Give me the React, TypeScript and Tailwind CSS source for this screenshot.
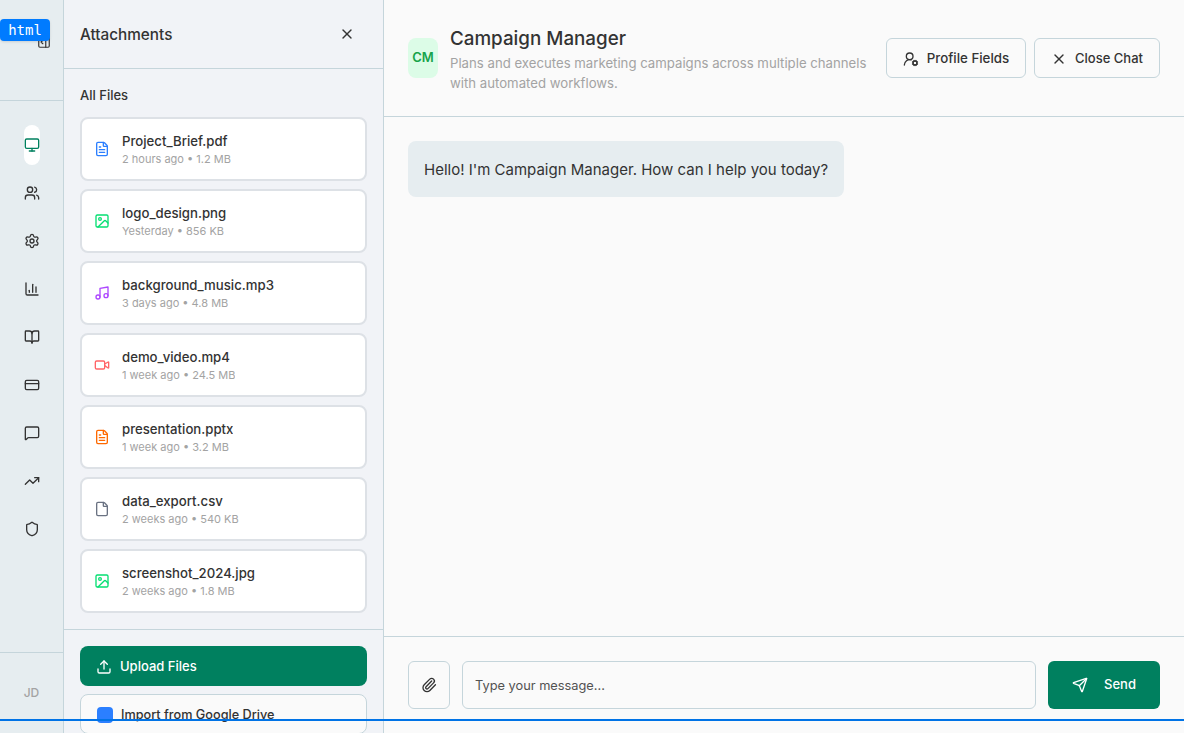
import {
  BookOpen,
  ChartColumn,
  CreditCard,
  File,
  FileText,
  Image,
  LucideIcon,
  MessageSquare,
  Monitor,
  Music,
  PanelRightOpen,
  Paperclip,
  Send,
  Settings,
  Shield,
  TrendingUp,
  Upload,
  UserRoundCog,
  Users,
  Video,
  X,
} from "lucide-react";

type Attachment = {
  name: string;
  meta: string;
  icon: LucideIcon;
  color: string;
};

const NAV: LucideIcon[] = [
  Users,
  Settings,
  ChartColumn,
  BookOpen,
  CreditCard,
  MessageSquare,
  TrendingUp,
  Shield,
];

const FILES: Attachment[] = [
  { name: "Project_Brief.pdf", meta: "2 hours ago • 1.2 MB", icon: FileText, color: "text-blue-500" },
  { name: "logo_design.png", meta: "Yesterday • 856 KB", icon: Image, color: "text-green-400" },
  { name: "background_music.mp3", meta: "3 days ago • 4.8 MB", icon: Music, color: "text-purple-500" },
  { name: "demo_video.mp4", meta: "1 week ago • 24.5 MB", icon: Video, color: "text-red-400" },
  { name: "presentation.pptx", meta: "1 week ago • 3.2 MB", icon: FileText, color: "text-orange-500" },
  { name: "data_export.csv", meta: "2 weeks ago • 540 KB", icon: File, color: "text-gray-500" },
  { name: "screenshot_2024.jpg", meta: "2 weeks ago • 1.8 MB", icon: Image, color: "text-green-400" },
];

function Sidebar() {
  return (
    <aside className="flex h-full w-16 shrink-0 flex-col border-r border-[#c5d5db] bg-[#e6edf0] text-[#333333]">
      <div className="flex h-[101px] shrink-0 items-start justify-end border-b border-[#c5d5db] pr-3 pt-[35px]">
        <PanelRightOpen size={14} />
      </div>
      <nav className="flex flex-1 flex-col items-center gap-2 pt-6">
        <div className="flex h-10 w-4 items-center justify-center rounded-lg bg-white text-[#00805f]">
          <Monitor size={16} className="shrink-0" />
        </div>
        {NAV.map((Icon, i) => (
          <div key={i} className="flex h-10 w-4 items-center justify-center">
            <Icon size={16} className="shrink-0" />
          </div>
        ))}
      </nav>
      <div className="flex h-[81px] shrink-0 items-center justify-center border-t border-[#c5d5db] text-xs font-medium text-[#a3a3a3]">
        JD
      </div>
    </aside>
  );
}

function FileRow({ file }: { file: Attachment }) {
  const Icon = file.icon;
  return (
    <div className="flex h-16 items-center gap-3 rounded-lg border-2 border-[#dde1e6] bg-white px-3">
      <Icon size={16} className={`shrink-0 ${file.color}`} />
      <div className="min-w-0">
        <p className="truncate text-[13.2px] leading-[18px] font-medium text-[#333333]">{file.name}</p>
        <p className="mt-px truncate text-[11px] leading-4 text-[#a3a3a3]">{file.meta}</p>
      </div>
    </div>
  );
}

function AttachmentsPanel() {
  return (
    <section className="flex h-full w-80 shrink-0 flex-col border-r border-[#c5d5db] bg-[#f1f3f7]">
      <div className="flex h-[69px] shrink-0 items-center justify-between border-b border-[#c5d5db] pl-4 pr-7">
        <h2 className="pt-0.5 text-[15.3px] font-[550] text-[#333333]">Attachments</h2>
        <X size={16} className="text-[#333333]" />
      </div>
      <div className="flex-1 px-4 pt-[18px]">
        <h3 className="mb-3.5 text-[13px] leading-4 font-medium text-[#333333]">All Files</h3>
        <div className="flex flex-col gap-2">
          {FILES.map((f) => (
            <FileRow key={f.name} file={f} />
          ))}
        </div>
      </div>
      <div className="flex h-[104px] shrink-0 flex-col gap-2 border-t border-[#c5d5db] px-4 pt-4">
        <button className="flex h-10 shrink-0 items-center gap-2 rounded-lg bg-[#00805f] px-4 pt-0.5 text-[13px] font-medium text-white">
          <Upload size={16} />
          Upload Files
        </button>
        <button className="flex h-10 shrink-0 items-center gap-2 rounded-lg border border-[#c5d5db] bg-[#fafafa] px-4 pt-0.5 text-[12.7px] font-medium text-[#333333]">
          <span className="size-4 rounded bg-blue-500" />
          Import from Google Drive
        </button>
      </div>
    </section>
  );
}

function ChatPanel() {
  return (
    <main className="flex h-full min-w-0 flex-1 flex-col bg-[#fafafa]">
      <header className="flex h-[117px] shrink-0 items-center gap-4 border-b border-[#c5d5db] px-6">
        <div className="flex flex-1 items-center gap-3">
          <div className="flex h-10 w-[30px] shrink-0 items-center justify-center rounded-lg bg-[#dcfce7] text-[13px] font-semibold text-[#16a34a]">
            CM
          </div>
          <div className="pt-0.5">
            <h1 className="text-[18.8px] leading-7 font-[550] text-[#333333]">Campaign Manager</h1>
            <p className="text-[13.2px] leading-5 text-[#a3a3a3]">
              Plans and executes marketing campaigns across multiple channels with automated workflows.
            </p>
          </div>
        </div>
        <div className="flex shrink-0 gap-2">
          <button className="flex h-10 w-[140px] items-center justify-center gap-2 rounded-md border border-[#c5d5db] pt-0.5 text-[13.3px] font-medium text-[#333333]">
            <UserRoundCog size={16} />
            Profile Fields
          </button>
          <button className="flex h-10 w-[126px] items-center justify-center gap-2 rounded-md border border-[#c5d5db] pt-0.5 text-[13px] font-medium text-[#333333]">
            <X size={16} />
            Close Chat
          </button>
        </div>
      </header>
      <div className="flex-1 p-6">
        <div className="w-fit rounded-lg bg-[#e6edf0] px-4 pb-[15px] pt-[17px] text-[15px] leading-6 text-[#333333]">
          Hello! I'm Campaign Manager. How can I help you today?
        </div>
      </div>
      <footer className="flex h-[97px] shrink-0 items-start gap-3 border-t border-[#c5d5db] px-6 pt-6">
        <button className="flex h-12 w-[42px] shrink-0 items-center justify-center rounded-md border border-[#c5d5db] text-[#333333]">
          <Paperclip size={16} />
        </button>
        <input
          placeholder="Type your message..."
          className="h-12 min-w-0 flex-1 rounded-md border border-[#c5d5db] bg-transparent px-3 text-[12.8px] outline-none placeholder:text-[#525252]"
        />
        <button className="flex h-12 w-28 shrink-0 items-center justify-center gap-4 rounded-md bg-[#00805f] text-[13px] font-medium text-white">
          <Send size={16} />
          Send
        </button>
      </footer>
    </main>
  );
}

export default function App() {
  return (
    <div className="relative flex h-[733px] w-full overflow-hidden font-['Inter',sans-serif]">
      <Sidebar />
      <AttachmentsPanel />
      <ChatPanel />
      {/* inspector overlay */}
      <div className="pointer-events-none absolute inset-x-0 top-[719px] h-0.5 bg-[#0073e6]" />
      <div className="absolute left-0 top-[19px] flex h-[22px] w-[50px] items-center justify-center rounded bg-[#007bff] font-['DejaVu_Sans_Mono',monospace] text-sm font-medium text-white shadow">
        html
      </div>
    </div>
  );
}
